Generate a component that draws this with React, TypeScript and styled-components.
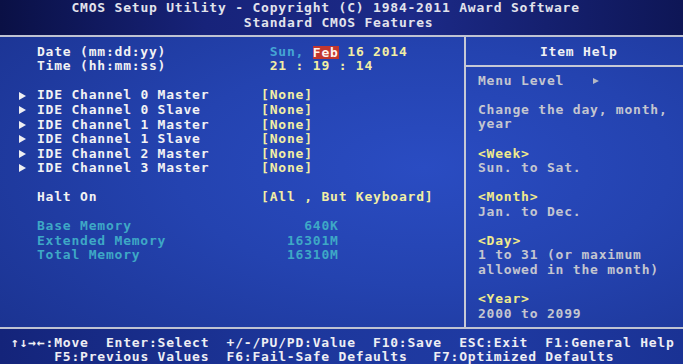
import styled, { createGlobalStyle } from 'styled-components'

// 80 x 25 text screen, one cell = CW x RH
const CW = 8.62
const RH = 14.56
const col = (n: number) => 2.5 + n * CW

const Global = createGlobalStyle`
    html, body {
        margin: 0;
        padding: 0;
        background: #0a1040;
    }
    body {
        width: 683px;
        height: 364px;
        overflow: hidden;
    }
`

const Screen = styled.div`
    width: 683px;
    height: 364px;
    display: flex;
    flex-direction: column;
    overflow: hidden;
    font-family: 'DejaVu Sans Mono', 'Liberation Mono', monospace;
    font-size: 13px;
    font-weight: 700;
    letter-spacing: 0.79px;
    color: #ececf0;
`

const Header = styled.div`
    height: 35px;
    flex: none;
    box-sizing: border-box;
    padding-top: 1px;
    background: linear-gradient(90deg, #0a1045 0%, #17237a 30%, #1c2a88 60%, #0e1656 100%);
    color: #e2e3ec;
`

const Line = styled.div<{ $indent?: number }>`
    height: ${RH}px;
    line-height: ${RH}px;
    white-space: pre;
    padding-left: ${(p) => col(p.$indent ?? 0)}px;
`

const Box = styled.div`
    height: 293.5px;
    flex: none;
    box-sizing: border-box;
    display: flex;
    border-top: 2px solid #bfc3d2;
    border-bottom: 2px solid #bfc3d2;
    background: radial-gradient(ellipse 80% 90% at 62% 45%, #2a4cc2 0%, #2443b0 45%, #1b3391 100%);
`

const Left = styled.div`
    width: 466px;
    flex: none;
    box-sizing: border-box;
    padding-top: 7.8px;
    padding-left: 2.5px;
    border-right: 2px solid #c6c9d6;
`

const Right = styled.div`
    flex: 1;
    display: flex;
    flex-direction: column;
`

const HelpTitle = styled.div`
    height: 28px;
    line-height: 29px;
    flex: none;
    padding-left: 74px;
    border-bottom: 2px solid #c6c9d6;
    color: #f0f0f4;
`

const HelpBody = styled.div`
    padding-top: 6.8px;
    padding-left: 12px;
    color: #c4c6d0;
`

const Row = styled.div`
    height: ${RH}px;
    line-height: ${RH}px;
    display: flex;
    align-items: center;
    white-space: pre;
`

const Cell = styled.span<{ $n: number; $right?: boolean }>`
    width: ${(p) => p.$n * CW}px;
    flex: none;
    display: flex;
    align-items: center;
    justify-content: ${(p) => (p.$right ? 'flex-end' : 'flex-start')};
`

const Marker = styled.span`
    width: ${4 * CW}px;
    flex: none;
    display: flex;
    align-items: center;
    padding-left: ${2 * CW - 0.5}px;
    box-sizing: border-box;

    &::before {
        content: '';
        width: 0;
        height: 0;
        border-top: 4px solid transparent;
        border-bottom: 4px solid transparent;
        border-left: 7px solid #eeeef2;
    }
`

const SmallArrow = styled.span`
    display: inline-block;
    width: 0;
    height: 0;
    margin-left: ${3 * CW + 3}px;
    border-top: 3.5px solid transparent;
    border-bottom: 3.5px solid transparent;
    border-left: 6px solid #b4b7c4;
`

const Label = styled.span`
    color: #f2f2f4;
`

const Value = styled.span`
    color: #f2eea4;
`

const Cyan = styled.span`
    color: #3ea8c6;
`

const Day = styled.span`
    color: #45a6d4;
`

const Selected = styled.span`
    background: #c2372e;
    color: #fff4ee;
    line-height: 13px;
`

const Heading = styled.span`
    color: #f0ea8c;
`

const Footer = styled.div`
    flex: 1;
    padding-top: 7.2px;
    background: linear-gradient(90deg, #14247a 0%, #1d379c 45%, #1f3aa2 70%, #1a3294 100%);
    color: #eeeef4;
`

const channels = ['0 Master', '0 Slave', '1 Master', '1 Slave', '2 Master', '3 Master']

const memory = [
    ['Base Memory', '640K'],
    ['Extended Memory', '16301M'],
    ['Total Memory', '16310M'],
]

const Blank = () => <Row />

export default function App() {
    return (
        <>
            <Global />
            <Screen>
                <Header>
                    <Line $indent={8}>CMOS Setup Utility - Copyright (C) 1984-2011 Award Software</Line>
                    <Line $indent={28}>Standard CMOS Features</Line>
                </Header>

                <Box>
                    <Left>
                        <Row>
                            <Cell $n={4} />
                            <Cell $n={27}>
                                <Label>Date (mm:dd:yy)</Label>
                            </Cell>
                            <Day>Sun, </Day>
                            <Selected>Feb</Selected>
                            <Value> 16 2014</Value>
                        </Row>
                        <Row>
                            <Cell $n={4} />
                            <Cell $n={27}>
                                <Label>Time (hh:mm:ss)</Label>
                            </Cell>
                            <Value>21 : 19 : 14</Value>
                        </Row>
                        <Blank />
                        {channels.map((c) => (
                            <Row key={c}>
                                <Marker />
                                <Cell $n={26}>
                                    <Label>IDE Channel {c}</Label>
                                </Cell>
                                <Value>[None]</Value>
                            </Row>
                        ))}
                        <Blank />
                        <Row>
                            <Cell $n={4} />
                            <Cell $n={26}>
                                <Label>Halt On</Label>
                            </Cell>
                            <Value>[All , But Keyboard]</Value>
                        </Row>
                        <Blank />
                        {memory.map(([name, size]) => (
                            <Row key={name}>
                                <Cell $n={4} />
                                <Cell $n={29}>
                                    <Cyan>{name}</Cyan>
                                </Cell>
                                <Cell $n={6} $right>
                                    <Cyan>{size}</Cyan>
                                </Cell>
                            </Row>
                        ))}
                    </Left>

                    <Right>
                        <HelpTitle>Item Help</HelpTitle>
                        <HelpBody>
                            <Row>
                                Menu Level
                                <SmallArrow />
                            </Row>
                            <Blank />
                            <Row>Change the day, month,</Row>
                            <Row>year</Row>
                            <Blank />
                            <Row>
                                <Heading>&lt;Week&gt;</Heading>
                            </Row>
                            <Row>Sun. to Sat.</Row>
                            <Blank />
                            <Row>
                                <Heading>&lt;Month&gt;</Heading>
                            </Row>
                            <Row>Jan. to Dec.</Row>
                            <Blank />
                            <Row>
                                <Heading>&lt;Day&gt;</Heading>
                            </Row>
                            <Row>1 to 31 (or maximum</Row>
                            <Row>allowed in the month)</Row>
                            <Blank />
                            <Row>
                                <Heading>&lt;Year&gt;</Heading>
                            </Row>
                            <Row>2000 to 2099</Row>
                        </HelpBody>
                    </Right>
                </Box>

                <Footer>
                    <Line $indent={1}>↑↓→←:Move  Enter:Select  +/-/PU/PD:Value  F10:Save  ESC:Exit  F1:General Help</Line>
                    <Line $indent={6}>F5:Previous Values  F6:Fail-Safe Defaults   F7:Optimized Defaults</Line>
                </Footer>
            </Screen>
        </>
    )
}
